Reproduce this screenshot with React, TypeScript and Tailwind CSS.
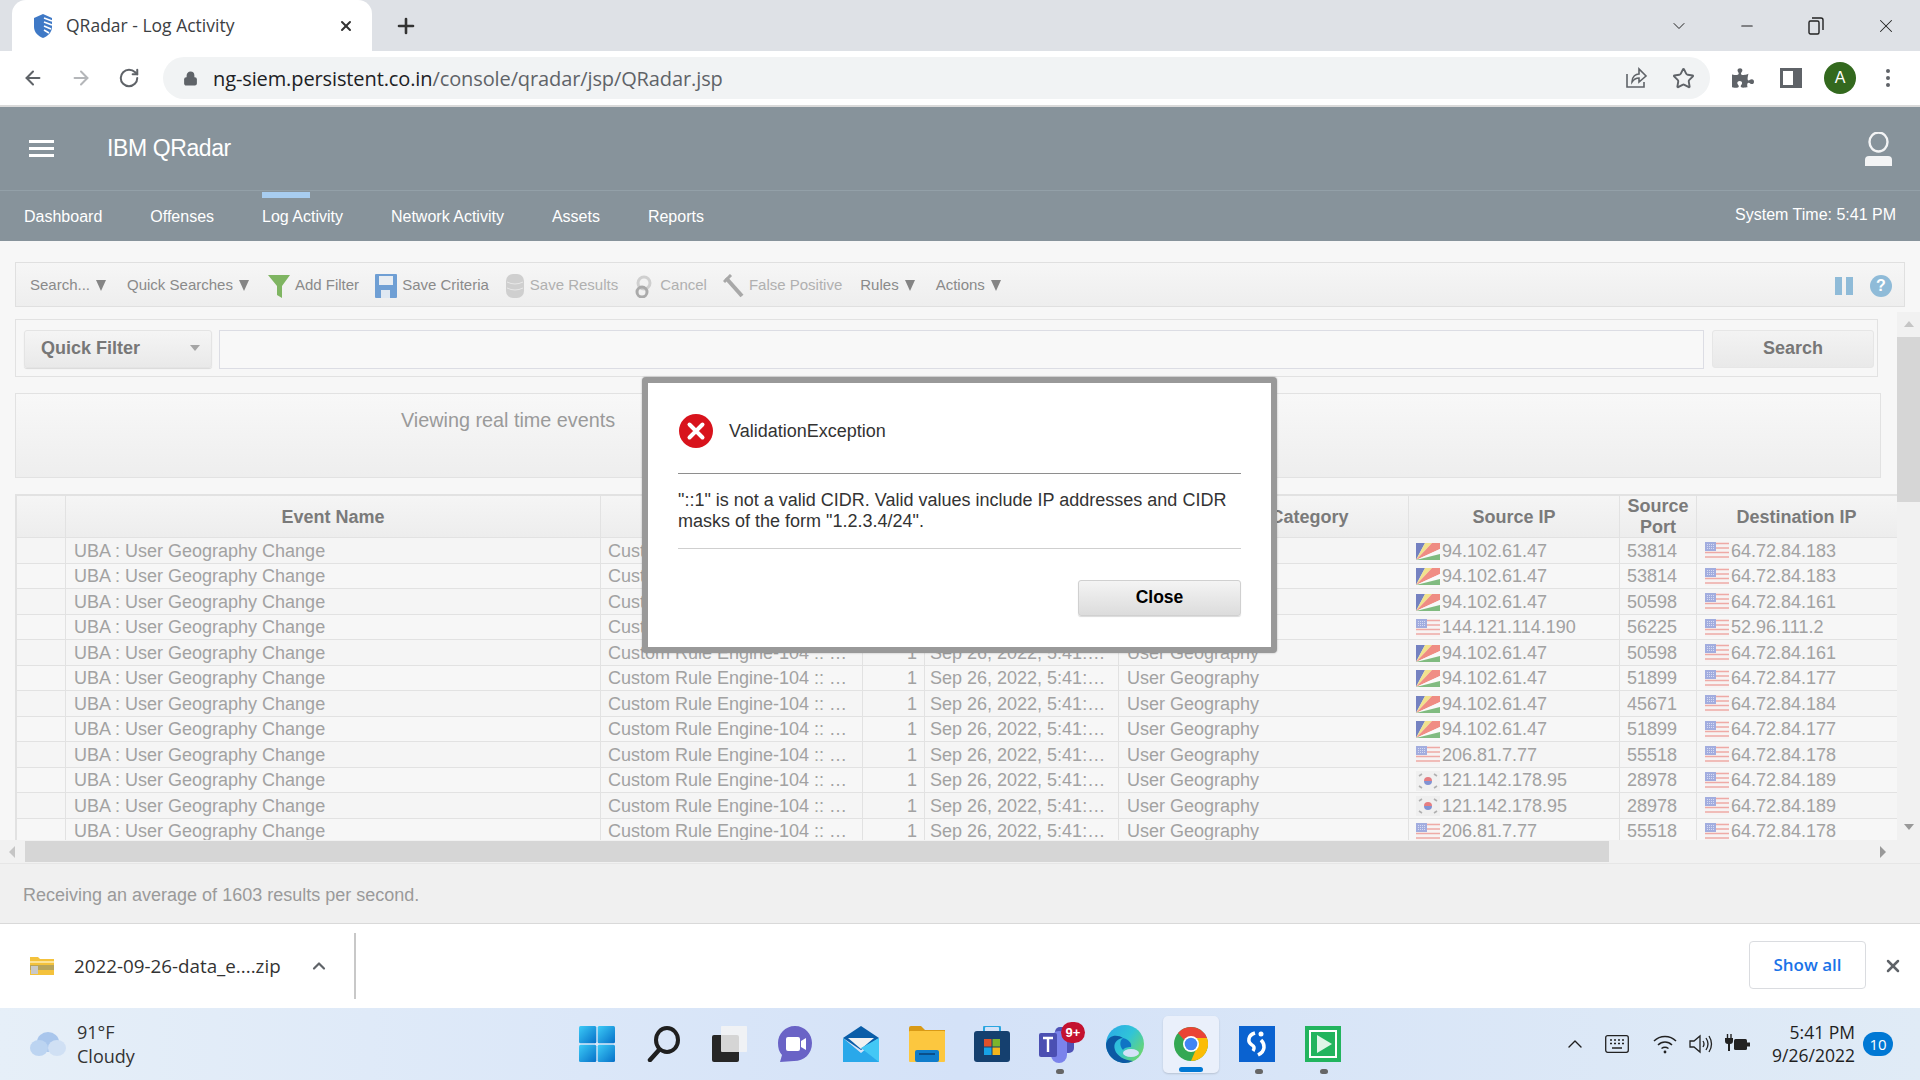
import { ArrowLeft, ArrowRight, RotateCw, Lock, Star, ChevronDown, ChevronUp, Minus, X, Plus } from "lucide-react";
import { FaPuzzlePiece } from "react-icons/fa";

type Flag = "sc" | "us" | "kr";

const rows: { src: string; srcFlag: Flag; port: string; dst: string }[] = [
  { src: "94.102.61.47", srcFlag: "sc", port: "53814", dst: "64.72.84.183" },
  { src: "94.102.61.47", srcFlag: "sc", port: "53814", dst: "64.72.84.183" },
  { src: "94.102.61.47", srcFlag: "sc", port: "50598", dst: "64.72.84.161" },
  { src: "144.121.114.190", srcFlag: "us", port: "56225", dst: "52.96.111.2" },
  { src: "94.102.61.47", srcFlag: "sc", port: "50598", dst: "64.72.84.161" },
  { src: "94.102.61.47", srcFlag: "sc", port: "51899", dst: "64.72.84.177" },
  { src: "94.102.61.47", srcFlag: "sc", port: "45671", dst: "64.72.84.184" },
  { src: "94.102.61.47", srcFlag: "sc", port: "51899", dst: "64.72.84.177" },
  { src: "206.81.7.77", srcFlag: "us", port: "55518", dst: "64.72.84.178" },
  { src: "121.142.178.95", srcFlag: "kr", port: "28978", dst: "64.72.84.189" },
  { src: "121.142.178.95", srcFlag: "kr", port: "28978", dst: "64.72.84.189" },
  { src: "206.81.7.77", srcFlag: "us", port: "55518", dst: "64.72.84.178" },
];

function FlagIcon({ kind }: { kind: Flag }) {
  if (kind === "sc") {
    return (
      <svg width="24" height="17" viewBox="0 0 24 17" className="shrink-0 opacity-75">
        <rect width="24" height="17" fill="#f3f3f3" />
        <path d="M0 17 L0 0 L9 0 Z" fill="#4a5bb0" />
        <path d="M0 17 L9 0 L16 0 Z" fill="#f0dc6a" />
        <path d="M0 17 L16 0 L24 0 L24 6 Z" fill="#ee6a5e" />
        <path d="M0 17 L24 6 L24 11 Z" fill="#fbfbfb" />
        <path d="M0 17 L24 11 L24 17 Z" fill="#5aa85a" />
      </svg>
    );
  }
  if (kind === "kr") {
    return (
      <svg width="24" height="20" viewBox="0 0 24 20" className="shrink-0 opacity-75">
        <rect width="24" height="20" fill="#eeeeee" />
        <path d="M8 10 a4 4 0 0 1 8 0 Z" fill="#e0555a" />
        <path d="M8 10 a4 4 0 0 0 8 0 Z" fill="#5a72c8" />
        <path d="M3 5 L6 3 M3 15 L6 17 M21 5 L18 3 M21 15 L18 17" stroke="#999" strokeWidth="1.6" />
      </svg>
    );
  }
  return (
    <svg width="24" height="18" viewBox="0 0 24 18" className="shrink-0 opacity-70">
      <rect width="24" height="18" fill="#f7f2f2" />
      <path d="M0 1.5H24M0 6H24M0 10.5H24M0 15H24" stroke="#ec8a84" strokeWidth="1.7" />
      <rect width="11" height="9" fill="#7f8fd6" />
      <path d="M2 2.5H9M2 4.5H9M2 6.5H9" stroke="#d9def6" strokeWidth="0.8" strokeDasharray="1 1" />
    </svg>
  );
}

function Caret() {
  return <span className="ml-[6px] inline-block h-0 w-0 border-x-[5px] border-t-[11px] border-x-transparent border-t-[#858585]" />;
}

function ErrorIcon() {
  return (
    <svg width="34" height="34" viewBox="0 0 34 34" className="shrink-0">
      <circle cx="17" cy="17" r="17" fill="#d8131c" />
      <path d="M10.5 10.5 L23.5 23.5 M23.5 10.5 L10.5 23.5" stroke="#fff" strokeWidth="4" strokeLinecap="round" />
    </svg>
  );
}

function Favicon() {
  return (
    <svg width="20" height="24" viewBox="0 0 20 24" className="shrink-0">
      <path d="M10 0 L19 4 V13 C19 18 15 22 10 24 C5 22 1 18 1 13 V4 Z" fill="#3f79c6" />
      <path d="M11 4 L19 7 M11 8 L19 11 M11 12 L18 15 M11 16 L16 19" stroke="#fff" strokeWidth="1.6" />
    </svg>
  );
}

function TaskIcons() {
  return (
    <div className="flex h-full items-center">
      {/* start */}
      <svg width="36" height="36" viewBox="0 0 36 36" className="ml-[579px] shrink-0">
        <defs>
          <linearGradient id="st" x1="0" y1="0" x2="1" y2="1">
            <stop offset="0" stopColor="#3ccbf7" />
            <stop offset="1" stopColor="#0670c8" />
          </linearGradient>
        </defs>
        <rect width="17.3" height="17.3" rx="1.5" fill="url(#st)" />
        <rect x="18.7" width="17.3" height="17.3" rx="1.5" fill="url(#st)" />
        <rect y="18.7" width="17.3" height="17.3" rx="1.5" fill="url(#st)" />
        <rect x="18.7" y="18.7" width="17.3" height="17.3" rx="1.5" fill="url(#st)" />
      </svg>
      {/* search */}
      <svg width="34" height="36" viewBox="0 0 34 36" className="ml-[32px] shrink-0">
        <ellipse cx="20" cy="14" rx="11" ry="12" fill="none" stroke="#1f1f1f" strokeWidth="4" />
        <path d="M12 24 L3 34" stroke="#1f1f1f" strokeWidth="4.5" strokeLinecap="round" />
      </svg>
      {/* task view */}
      <svg width="36" height="36" viewBox="0 0 36 36" className="ml-[30px] shrink-0">
        <rect x="1" y="9" width="27" height="27" rx="2" fill="#262626" />
        <rect x="10" y="0" width="26" height="26" rx="1" fill="#f4f4f4" fillOpacity="0.85" />
      </svg>
      {/* chat */}
      <svg width="36" height="36" viewBox="0 0 36 36" className="ml-[30px] shrink-0">
        <path d="M18 0 C28 0 35 8 35 17 C35 28 27 35 17 35 L3 36 L5 29 C2 26 1 22 1 17 C1 8 8 0 18 0 Z" fill="#6a63c6" />
        <rect x="9" y="11" width="14" height="14" rx="2" fill="#fff" />
        <path d="M24 15 L29 12 V24 L24 21 Z" fill="#fff" />
      </svg>
      {/* mail */}
      <svg width="36" height="36" viewBox="0 0 36 36" className="ml-[30px] shrink-0">
        <path d="M0 12 L18 0 L36 12 L18 24 Z" fill="#0a5da8" />
        <path d="M5 12 H31 L18 23 Z" fill="#f2f2f2" />
        <path d="M0 12 V36 H36 V12 L18 27 Z" fill="#29a8ea" />
        <path d="M36 12 V36 L18 22 Z" fill="#43c8f5" />
      </svg>
      {/* explorer */}
      <svg width="36" height="36" viewBox="0 0 36 36" className="ml-[30px] shrink-0">
        <path d="M0 2 Q0 0 2 0 H12 L16 4 H36 V10 H0 Z" fill="#d99a16" />
        <rect y="5" width="36" height="31" rx="1" fill="#fcc73f" />
        <rect x="6" y="24" width="24" height="12" rx="2" fill="#0f7dcc" />
        <rect x="10" y="27" width="16" height="2" fill="#0a4f8a" />
      </svg>
      {/* store */}
      <svg width="36" height="36" viewBox="0 0 36 36" className="ml-[29px] shrink-0">
        <path d="M10 6 V2 Q10 0 12 0 H24 Q26 0 26 2 V6" fill="none" stroke="#2aa6e0" strokeWidth="2" />
        <rect y="5" width="36" height="31" rx="3" fill="#15406f" />
        <rect x="10" y="13" width="7.5" height="7.5" fill="#e0512a" />
        <rect x="18.5" y="13" width="7.5" height="7.5" fill="#7cb42c" />
        <rect x="10" y="21.5" width="7.5" height="7.5" fill="#18a3e6" />
        <rect x="18.5" y="21.5" width="7.5" height="7.5" fill="#f4b51c" />
      </svg>
      {/* teams */}
      <div className="relative ml-[29px] mb-[3px] h-[41px] w-[46px] shrink-0">
        <svg width="36" height="36" viewBox="0 0 36 36" className="absolute bottom-0 left-0">
          <rect x="16" y="0" width="19" height="26" rx="5" fill="#4f53b7" />
          <rect x="12" y="4" width="16" height="32" rx="8" fill="#7b83eb" />
          <rect x="0" y="6" width="18" height="24" rx="2" fill="#4b4fb2" />
          <path d="M4 11 H14 M9 11 V25" stroke="#fff" strokeWidth="2.4" />
        </svg>
        <span className="absolute right-0 top-0 flex h-[21px] w-[24px] items-center justify-center rounded-full bg-[#c4122f] font-['Liberation_Sans',sans-serif] text-[13px] font-bold text-white">9+</span>
      </div>
      {/* edge */}
      <svg width="38" height="38" viewBox="0 0 38 38" className="ml-[21px] shrink-0">
        <defs>
          <linearGradient id="ed" x1="0" y1="0" x2="1" y2="0.7">
            <stop offset="0" stopColor="#2aa7e8" />
            <stop offset="0.55" stopColor="#30c4d8" />
            <stop offset="1" stopColor="#6cd66e" />
          </linearGradient>
        </defs>
        <circle cx="19" cy="19" r="19" fill="url(#ed)" />
        <path d="M19 38 C8 38 0 29 0 19 C2 10 11 9 17 13 C10 14 7 19 9 25 C11 31 18 35 27 36 C24 37 22 38 19 38 Z" fill="#0c59a4" />
        <path d="M17 13 C24 15 26 19 25 22 C23 22 19 22 17 25 C14 22 13 16 17 13 Z" fill="#0f74c4" />
        <ellipse cx="25" cy="28" rx="8" ry="4" fill="#d5e2f8" />
      </svg>
      {/* chrome */}
      <div className="relative ml-[19px] flex h-[57px] w-[56px] shrink-0 items-center justify-center rounded-[5px] bg-[#eaf0fb] shadow-[0_1px_2px_rgba(0,0,0,0.15)]">
        <svg width="34" height="34" viewBox="0 0 34 34" className="mb-[1px]">
          <circle cx="17" cy="17" r="17" fill="#34a853" />
          <path d="M17 0 A17 17 0 0 1 33 11 H17 A6 6 0 0 0 11 14 L4 6 A17 17 0 0 1 17 0 Z" fill="#ea4335" />
          <path d="M33 11 A17 17 0 0 1 17 34 L23 20 A6 6 0 0 0 22 11 Z" fill="#fbbc05" />
          <circle cx="17" cy="17" r="8" fill="#fff" />
          <circle cx="17" cy="17" r="6.3" fill="#4285f4" />
        </svg>
        <span className="absolute bottom-[1px] left-[16px] h-[5px] w-[24px] rounded-full bg-[#0078d4]" />
      </div>
      {/* snagit-like */}
      <svg width="36" height="36" viewBox="0 0 36 36" className="ml-[20px] shrink-0">
        <rect width="36" height="36" fill="#0a62d0" />
        <path d="M16 7 C9 9 8 16 13 19 C15 20 16 22 14 25" fill="none" stroke="#fff" strokeWidth="3.5" />
        <path d="M22 14 C26 18 27 25 19 29" fill="none" stroke="#fff" strokeWidth="3.5" />
        <circle cx="22" cy="8" r="2.5" fill="#fff" />
      </svg>
      {/* green */}
      <svg width="36" height="36" viewBox="0 0 36 36" className="ml-[30px] shrink-0">
        <rect width="36" height="36" fill="#22b45e" />
        <rect x="4" y="4" width="28" height="28" fill="#fff" />
        <rect x="6" y="6" width="24" height="24" fill="#22b45e" />
        <path d="M12 9 L27 18 L12 27 Z" fill="#dff5e8" />
      </svg>
      {/* running-app dots, under the taskbar icons */}
      <div className="relative h-full w-0">
        <span className="absolute bottom-[6px] -left-[285px] h-[5px] w-[8px] rounded-full bg-[#666]" />
        <span className="absolute bottom-[6px] -left-[86px] h-[5px] w-[8px] rounded-full bg-[#666]" />
        <span className="absolute bottom-[6px] -left-[21px] h-[5px] w-[8px] rounded-full bg-[#666]" />
      </div>
    </div>
  );
}

export default function App() {
  return (
    <div className="flex h-[1080px] w-[1920px] flex-col overflow-hidden bg-white font-['Liberation_Sans',sans-serif]">
      {/* tab strip */}
      <div className="flex h-[51px] shrink-0 items-end bg-[#dee1e6]">
        <div className="ml-[12px] flex h-[51px] w-[360px] items-center rounded-t-[14px] bg-white pl-[21px]">
          <Favicon />
          <span className="ml-[13px] font-['Open_Sans',sans-serif] text-[17.5px] text-[#3c4043]">QRadar - Log Activity</span>
          <X className="ml-[104px] text-[#333]" size={16} strokeWidth={3} />
        </div>
        <Plus className="mb-[13px] ml-[22px] text-[#333]" size={24} strokeWidth={2.6} />
        <div className="ml-auto flex h-[51px] items-center text-[#222]">
          <ChevronDown size={20} strokeWidth={1.2} />
          <Minus className="ml-[49px]" size={18} strokeWidth={1.4} />
          <svg width="16" height="18" viewBox="0 0 16 18" className="ml-[52px]" fill="none" stroke="#222" strokeWidth="1.4">
            <rect x="1" y="4" width="10" height="13" rx="1.5" />
            <path d="M4 1 H13 Q15 1 15 3 V13" />
          </svg>
          <X className="ml-[51px] mr-[23px]" size={22} strokeWidth={1.1} />
        </div>
      </div>

      {/* address bar */}
      <div className="flex h-[54px] shrink-0 items-center bg-white">
        <ArrowLeft className="ml-[22px] text-[#5f6368]" size={22} strokeWidth={2.2} />
        <ArrowRight className="ml-[26px] text-[#b4b6b9]" size={22} strokeWidth={2.2} />
        <RotateCw className="ml-[26px] text-[#5f6368]" size={22} strokeWidth={2.2} />
        <div className="ml-[23px] flex h-[42px] w-[1547px] items-center rounded-full bg-[#f1f3f4] pl-[20px]">
          <Lock className="fill-[#5f6368] text-[#5f6368]" size={15} strokeWidth={2.4} />
          <span className="ml-[15px] mt-px font-['Open_Sans',sans-serif] text-[20px] tracking-[-0.11px] text-[#202124]">
            ng-siem.persistent.co.in<span className="text-[#5f6368]">/console/qradar/jsp/QRadar.jsp</span>
          </span>
          <svg width="24" height="24" viewBox="0 0 24 24" className="ml-auto" fill="none" stroke="#5f6368" strokeWidth="1.6">
            <path d="M3 8 V21 H20 V16 M8 16 C8 10 12 8 15 8 V3 L22 10 L15 16 V12 C12 12 10 13 8 16 Z" />
          </svg>
          <Star className="ml-[24px] mr-[15px] text-[#5f6368]" size={23} strokeWidth={2} />
        </div>
        <FaPuzzlePiece className="ml-[22px] text-[#5f6368]" size={22} />
        <svg width="22" height="22" viewBox="0 0 22 22" className="ml-[26px]">
          <rect width="22" height="20" y="1" fill="#5f6368" />
          <rect x="3" y="4" width="10" height="14" fill="#fff" />
        </svg>
        <div className="ml-[22px] flex h-[32px] w-[32px] items-center justify-center rounded-full bg-[#33691e] text-[16px] text-white">A</div>
        <svg width="6" height="20" viewBox="0 0 6 20" className="ml-[29px]" fill="#5f6368">
          <circle cx="3" cy="3" r="2" />
          <circle cx="3" cy="10" r="2" />
          <circle cx="3" cy="17" r="2" />
        </svg>
      </div>

      {/* app header */}
      <div className="h-[136px] shrink-0 border-t-2 border-[#dadada] bg-[#87939b]">
        <div className="flex h-[84px] items-center border-b border-[#93a0a8] pl-[29px] pr-[28px]">
          <div className="flex w-[25px] flex-col gap-[4px]">
            <span className="h-[3px] bg-white" />
            <span className="h-[3px] bg-white" />
            <span className="h-[3px] bg-white" />
          </div>
          <span className="ml-[53px] text-[23px] tracking-[-0.4px] text-white">IBM QRadar</span>
          <svg width="27" height="34" viewBox="0 0 27 34" className="ml-auto">
            <ellipse cx="13.5" cy="10" rx="9" ry="9.5" fill="none" stroke="#f3f4f5" strokeWidth="2.4" />
            <path d="M0 34 V28 Q0 24 4 24 H23 Q27 24 27 28 V34 Z" fill="#f3f4f5" />
          </svg>
        </div>
        <div className="flex h-[50px] items-start pl-[24px] pr-[24px] text-[16px] text-white">
          <span className="mt-[14px]">Dashboard</span>
          <span className="ml-[48px] mt-[14px]">Offenses</span>
          <span className="relative ml-[48px] mt-[14px]">
            Log Activity
            <span className="absolute -top-[13px] left-0 h-[6px] w-[48px] bg-[#a8cdf0]" />
          </span>
          <span className="ml-[48px] mt-[14px]">Network Activity</span>
          <span className="ml-[48px] mt-[14px]">Assets</span>
          <span className="ml-[48px] mt-[14px]">Reports</span>
          <span className="ml-auto mt-[12px]">System Time: 5:41 PM</span>
        </div>
      </div>

      {/* page */}
      <div className="flex min-h-0 flex-1 flex-col bg-[#f7f7f7]">
        <div className="ml-[15px] mt-[21px] flex h-[45px] w-[1890px] shrink-0 items-center border border-[#e0e0e0] bg-gradient-to-b from-[#f6f6f6] to-[#eeeeee] pl-[14px] pr-[12px] pt-[2px] text-[15px] text-[#8a8a8a]">
          <span>Search...</span>
          <Caret />
          <span className="ml-[21px]">Quick Searches</span>
          <Caret />
          <svg width="22" height="24" viewBox="0 0 22 24" className="ml-[19px] shrink-0">
            <path d="M0 1 H22 L14 12 V24 L9 21 V12 Z" fill="#7fb562" />
          </svg>
          <span className="ml-[5px]">Add Filter</span>
          <svg width="22" height="24" viewBox="0 0 22 24" className="ml-[16px] shrink-0">
            <rect width="22" height="24" rx="1" fill="#6f9fd4" />
            <rect x="4" y="2" width="14" height="9" fill="#e8edf2" />
            <rect x="6" y="16" width="9" height="8" fill="#dfe8f2" />
          </svg>
          <span className="ml-[5px]">Save Criteria</span>
          <svg width="18" height="24" viewBox="0 0 18 24" className="ml-[17px] shrink-0">
            <rect width="18" height="24" rx="7" fill="#cfcfcf" />
            <path d="M1 8 Q9 12 17 8 M1 14 Q9 18 17 14" stroke="#e8e8e8" fill="none" />
          </svg>
          <span className="ml-[6px] text-[#b0b0b0]">Save Results</span>
          <svg width="20" height="24" viewBox="0 0 20 24" className="ml-[16px] shrink-0" fill="none">
            <circle cx="10" cy="9" r="6" stroke="#cfcfcf" strokeWidth="3" />
            <circle cx="8" cy="18" r="5" stroke="#aaaaaa" strokeWidth="3" />
          </svg>
          <span className="ml-[6px] text-[#b0b0b0]">Cancel</span>
          <svg width="22" height="24" viewBox="0 0 22 24" className="ml-[16px] shrink-0" fill="none">
            <path d="M3 4 L19 22" stroke="#a8a8a8" strokeWidth="4" />
            <path d="M1 8 L8 1" stroke="#a8a8a8" strokeWidth="3" />
          </svg>
          <span className="ml-[4px] text-[#b0b0b0]">False Positive</span>
          <span className="ml-[18px]">Rules</span>
          <Caret />
          <span className="ml-[21px]">Actions</span>
          <Caret />
          <div className="ml-auto flex h-[18px] w-[18px] justify-between">
            <span className="w-[7px] bg-[#8fbbd8]" />
            <span className="w-[7px] bg-[#8fbbd8]" />
          </div>
          <span className="ml-[17px] flex h-[22px] w-[22px] items-center justify-center rounded-full bg-[#8fbbd8] text-[16px] font-bold text-white">?</span>
        </div>

        <div className="mt-[5px] flex min-h-0 flex-1">
          <div className="min-w-0 flex-1 pl-[15px] pt-[7px]">
            <div className="flex h-[58px] w-[1863px] items-start border border-[#e2e2e2] pl-[8px] pt-[10px]">
              <div className="flex h-[38px] w-[188px] items-center justify-between rounded-[3px] border border-[#e4e4e4] bg-gradient-to-b from-[#f5f5f5] to-[#e9e9e9] pb-[2px] pl-[16px] pr-[11px] text-[18px] font-bold text-[#777] shadow-[0_1px_1px_rgba(0,0,0,0.12)]">
                Quick Filter
                <span className="h-0 w-0 border-x-[5px] border-t-[6px] border-x-transparent border-t-[#a5a5a5]" />
              </div>
              <div className="ml-[7px] h-[39px] w-[1485px] border border-[#dcdde4] bg-[#f8f8f8]" />
              <div className="ml-[8px] flex h-[38px] w-[162px] items-center justify-center rounded-[3px] border border-[#e6e6e6] bg-gradient-to-b from-[#f3f3f3] to-[#e9e9e9] pb-[2px] text-[18px] font-bold text-[#777]">Search</div>
            </div>
            <div className="mt-[16px] h-[85px] w-[1866px] border border-[#e2e2e2] bg-gradient-to-b from-[#f8f8f8] to-[#eeeeee] pl-[385px] pt-[12px] text-[19.8px] text-[#9a9a9a]">
              Viewing real time events
            </div>
            <div className="mt-[16px] h-[346px] w-[1882px] overflow-hidden border-l-2 border-t-2 border-[#e2e2e2] text-[18px] text-[#a2a2a2]">
              <div className="flex h-[42px] items-stretch border-b border-[#e2e2e2] bg-gradient-to-b from-[#f5f5f5] to-[#ededed] text-center text-[18px] font-bold leading-[21px] text-[#7a7a7a]">
                <div className="w-[49px] border-r border-[#e2e2e2]" />
                <div className="flex w-[535px] items-center justify-center border-r border-[#e2e2e2] pt-[2px]">Event Name</div>
                <div className="w-[262px] border-r border-[#e2e2e2]" />
                <div className="w-[62px] border-r border-[#e2e2e2]" />
                <div className="w-[194px] border-r border-[#e2e2e2]" />
                <div className="flex w-[290px] items-center justify-center border-r border-[#e2e2e2] pt-[2px]">Low Level Category</div>
                <div className="flex w-[211px] items-center justify-center border-r border-[#e2e2e2] pt-[2px]">Source IP</div>
                <div className="flex w-[77px] items-center justify-center border-r border-[#e2e2e2]">Source Port</div>
                <div className="flex w-[199px] items-center justify-center pt-[2px]">Destination IP</div>
              </div>
              {rows.map((r, i) => (
                <div key={i} className="flex h-[25.5px] items-center border-b border-[#e2e2e2] even:bg-[#f5f5f5]">
                  <div className="h-full w-[49px] border-r border-[#e2e2e2]" />
                  <div className="flex h-full w-[535px] items-center border-r border-[#e2e2e2] pl-[8px] pt-[2px]">UBA : User Geography Change</div>
                  <div className="flex h-full w-[262px] items-center border-r border-[#e2e2e2] pl-[7px] pt-[2px]">Custom Rule Engine-104 :: …</div>
                  <div className="flex h-full w-[62px] items-center justify-end border-r border-[#e2e2e2] pr-[7px] pt-[2px]">1</div>
                  <div className="flex h-full w-[194px] items-center border-r border-[#e2e2e2] pl-[5px] pt-[2px]">Sep 26, 2022, 5:41:…</div>
                  <div className="flex h-full w-[290px] items-center border-r border-[#e2e2e2] pl-[8px] pt-[2px]">User Geography</div>
                  <div className="flex h-full w-[211px] items-center gap-[2px] border-r border-[#e2e2e2] pl-[7px] pt-[2px]">
                    <FlagIcon kind={r.srcFlag} />
                    {r.src}
                  </div>
                  <div className="flex h-full w-[77px] items-center border-r border-[#e2e2e2] pl-[7px] pt-[2px]">{r.port}</div>
                  <div className="flex h-full w-[199px] items-center gap-[2px] pl-[8px] pt-[2px]">
                    <FlagIcon kind="us" />
                    {r.dst}
                  </div>
                </div>
              ))}
            </div>
          </div>
          {/* vertical scrollbar */}
          <div className="flex h-[530px] w-[23px] shrink-0 flex-col items-center bg-[#f1f1f1]">
            <span className="mt-[9px] h-0 w-0 border-x-[5px] border-b-[6px] border-x-transparent border-b-[#c5c5c5]" />
            <span className="mt-[10px] h-[165px] w-full bg-[#d6d6d6]" />
            <span className="mt-auto mb-[12px] h-0 w-0 border-x-[5px] border-t-[6px] border-x-transparent border-t-[#999]" />
          </div>
        </div>

        {/* horizontal scrollbar */}
        <div className="flex h-[23px] shrink-0 items-center bg-[#f1f1f1]">
          <span className="ml-[9px] h-0 w-0 border-y-[6px] border-r-[6px] border-y-transparent border-r-[#c5c5c5]" />
          <span className="ml-[10px] h-[21px] w-[1584px] bg-[#d6d6d6]" />
          <span className="ml-[271px] h-0 w-0 border-y-[6px] border-l-[6px] border-y-transparent border-l-[#999]" />
        </div>

        <div className="flex h-[60px] shrink-0 items-center border-t border-[#e6e6e6] bg-[#f0f0f0] pl-[23px] pt-[3px] text-[18px] text-[#9a9a9a]">
          Receiving an average of 1603 results per second.
        </div>
      </div>

      {/* download bar */}
      <div className="flex h-[85px] shrink-0 items-center border-t border-[#d9d9d9] bg-white">
        <svg width="24" height="18" viewBox="0 0 24 18" className="ml-[30px] shrink-0">
          <path d="M0 0 H8 L10 2 H24 V18 H0 Z" fill="#f4c23c" />
          <rect y="4" width="24" height="2" fill="#fbe39a" />
          <rect y="8" width="24" height="5" fill="#8f8f6e" fillOpacity="0.6" />
          <rect x="1" y="9" width="7" height="8" fill="#c9c9c9" />
        </svg>
        <span className="ml-[20px] font-['Open_Sans',sans-serif] text-[18.8px] text-[#333]">2022-09-26-data_e....zip</span>
        <ChevronUp className="ml-[28px] text-[#5f6368]" size={20} strokeWidth={2.6} />
        <span className="ml-[25px] h-[66px] w-[2px] bg-[#c8c8c8]" />
        <div className="ml-auto mb-[2px] flex h-[48px] w-[117px] items-center justify-center rounded-[4px] border border-[#dadce0] font-['Open_Sans',sans-serif] text-[17px] font-semibold text-[#1a73e8]">Show all</div>
        <X className="ml-[17px] mr-[17px] text-[#5f6368]" size={20} strokeWidth={3} />
      </div>

      {/* taskbar */}
      <div className="flex h-[72px] shrink-0 items-center bg-gradient-to-r from-[#e6eff8] via-[#d4e2f8] to-[#e0ebf6]">
        <div className="flex h-full w-0 shrink-0 items-center">
          <svg width="36" height="24" viewBox="0 0 36 24" className="ml-[30px] shrink-0">
            <ellipse cx="18" cy="10" rx="11" ry="10" fill="#a9c6ec" />
            <ellipse cx="9" cy="16" rx="9" ry="8" fill="#bcd4f1" />
            <ellipse cx="27" cy="16" rx="9" ry="8" fill="#d0e0f4" />
          </svg>
          <div className="ml-[11px] shrink-0 font-['Open_Sans',sans-serif] text-[18px] leading-[24px] text-[#333]">
            <div>91°F</div>
            <div>Cloudy</div>
          </div>
        </div>
        <TaskIcons />
        <div className="relative h-full flex-1" />
        <div className="flex h-full items-center pr-[27px] text-[#1f1f1f]">
          <ChevronUp size={24} strokeWidth={1.4} />
          <svg width="24" height="18" viewBox="0 0 24 18" className="ml-[18px]" fill="none" stroke="#222" strokeWidth="1.3">
            <rect x="0.7" y="0.7" width="22.6" height="16.6" rx="2" />
            <path d="M5 5H7M9 5H11M13 5H15M17 5H19M5 8.5H7M9 8.5H11M13 8.5H15M17 8.5H19M7 13H17" />
          </svg>
          <svg width="24" height="20" viewBox="0 0 24 20" className="ml-[24px]" fill="none" stroke="#222" strokeWidth="1.5">
            <path d="M1 7 C7 1 17 1 23 7 M5 11 C9 7 15 7 19 11 M8.5 14.5 C10.5 13 13.5 13 15.5 14.5" />
            <circle cx="12" cy="18" r="1.4" fill="#222" stroke="none" />
          </svg>
          <svg width="24" height="20" viewBox="0 0 24 20" className="ml-[12px]" fill="none" stroke="#222" strokeWidth="1.3">
            <path d="M1 7 H5 L11 2 V18 L5 13 H1 Z" />
            <path d="M14 7 Q16 10 14 13 M17 4 Q21 10 17 16 M20 2 Q25 10 20 18" />
          </svg>
          <svg width="25" height="20" viewBox="0 0 25 20" className="ml-[12px]">
            <path d="M2.5 0 V4 M6 0 V4" stroke="#222" strokeWidth="1.4" />
            <path d="M0 4 H8 V7 Q8 10 5 10 V17 H3 V10 Q0 10 0 7 Z" fill="#222" />
            <rect x="9" y="5" width="13" height="11" rx="1.5" fill="#222" />
            <rect x="22" y="8.5" width="3" height="4" fill="#222" />
          </svg>
          <div className="ml-[20px] w-[85px] text-right font-['Open_Sans',sans-serif] text-[17.5px] leading-[23px]">
            <div>5:41 PM</div>
            <div>9/26/2022</div>
          </div>
          <span className="ml-[8px] flex h-[24px] w-[30px] items-center justify-center rounded-full bg-[#0078d4] font-['Open_Sans',sans-serif] text-[15px] text-white">10</span>
        </div>
      </div>

      {/* error dialog */}
      <div className="absolute left-[642px] top-[377px] h-[276px] w-[635px] rounded-[4px] border-[6px] border-[#999] bg-white px-[30px] shadow-[0_0_2px_rgba(0,0,0,0.3)]">
        <div className="flex h-[91px] items-center border-b border-[#8e8e8e] pl-px pt-[6px]">
          <ErrorIcon />
          <span className="ml-[16px] text-[18px] text-[#333]">ValidationException</span>
        </div>
        <div className="h-[75px] border-b border-[#cfcfcf] pt-[16px] text-[18px] leading-[21px] text-[#333]">
          "::1" is not a valid CIDR. Valid values include IP addresses and CIDR masks of the form "1.2.3.4/24".
        </div>
        <div className="flex justify-end pt-[31px]">
          <div className="flex h-[36px] w-[163px] items-center justify-center rounded-[3px] border border-[#d0d0d0] bg-gradient-to-b from-[#f4f4f4] to-[#dcdcdc] pb-[2px] text-[17.5px] font-bold text-black shadow-[0_1px_1px_rgba(0,0,0,0.15)]">Close</div>
        </div>
      </div>
    </div>
  );
}
